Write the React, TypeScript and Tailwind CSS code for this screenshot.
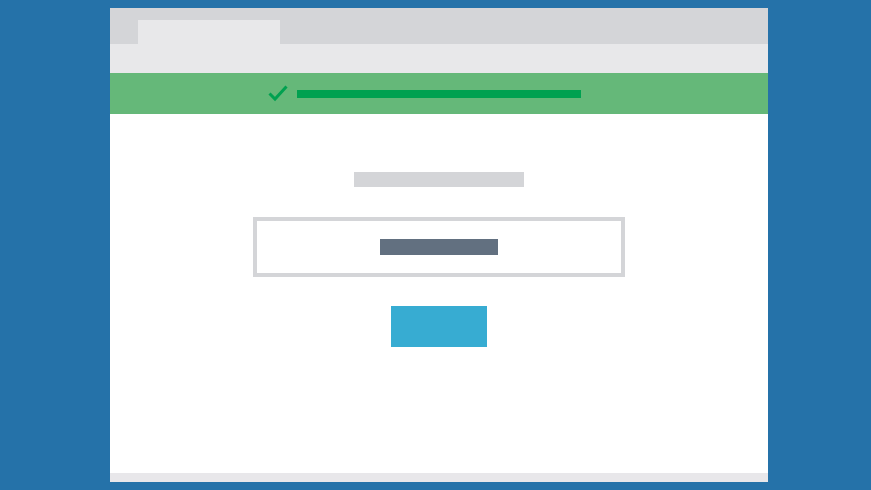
export default function App() {
  return (
    <div className="w-[871px] h-[490px] bg-[#2572a9] pt-[8px] pl-[110px] overflow-hidden">
      <div className="w-[658px] flex flex-col">
        {/* Tab strip */}
        <div className="h-[36px] bg-[#d4d5d8] pl-[28px] pt-[12px]">
          <div className="w-[142px] h-[24px] bg-[#e8e8ea]" />
        </div>
        {/* Address bar */}
        <div className="h-[29px] bg-[#e8e8ea]" />
        {/* Success banner */}
        <div className="h-[41px] bg-[#65b879] flex items-center justify-center">
          <div className="relative w-[284px] h-[8px] bg-[#00a150] mt-[1px]">
            <svg
              className="absolute -left-[29px] -top-[5px]"
              width="20"
              height="17"
              viewBox="0 0 20 17"
              fill="none"
            >
              <path d="M1.5 8.5 L7 14 L18.5 1.5" stroke="#00a150" strokeWidth="3" />
            </svg>
          </div>
        </div>
        {/* Page body */}
        <div className="h-[359px] bg-white flex flex-col items-center pt-[58px]">
          <div className="w-[170px] h-[15px] bg-[#d4d5d8]" />
          <div className="mt-[30px] w-[372px] h-[60px] border-4 border-[#d4d5d8] flex items-center justify-center">
            <div className="w-[118px] h-[16px] bg-[#627080]" />
          </div>
          <div className="mt-[29px] w-[96px] h-[41px] bg-[#37acd2]" />
        </div>
        <div className="h-[9px] bg-[#e8e7ea]" />
      </div>
    </div>
  );
}
